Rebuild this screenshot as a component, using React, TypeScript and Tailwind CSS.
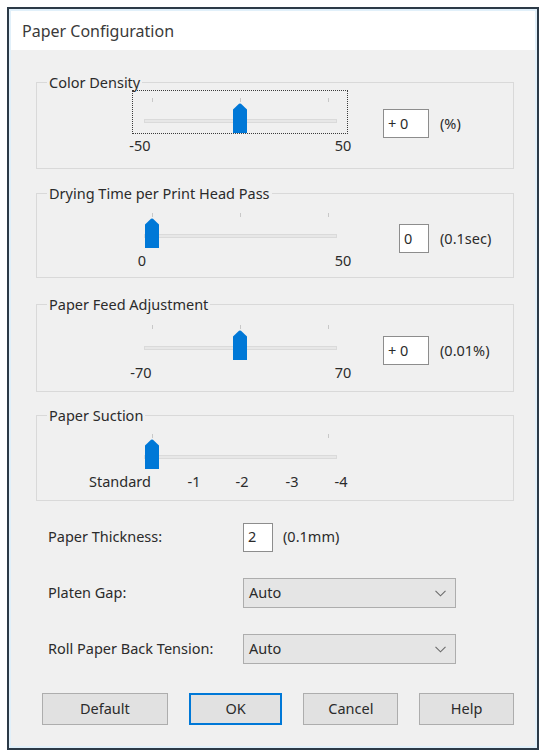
import React from 'react';

type Label = { text: string; at: number };

type SliderProps = {
  min: number;
  max: number;
  value: number;
  ticks: number[];
  labels: Label[];
  focused?: boolean;
};

// map a slider value onto the 176px travel of the thumb
const toX = (v: number, min: number, max: number) => 20 + ((v - min) / (max - min)) * 176;

const Slider: React.FC<SliderProps> = ({ min, max, value, ticks, labels, focused }) => {
  const x = toX(value, min, max);
  return (
    <div className="w-[216px]">
      <div
        className={
          'relative w-[216px] h-[44px] border ' +
          (focused ? 'border-dotted border-[#3a3a3a]' : 'border-transparent')
        }
      >
        {ticks.map((t) => (
          <div
            key={t}
            className="absolute top-[7px] w-px h-[4px] bg-[#c8c8c8]"
            style={{ left: toX(t, min, max) - 1 }}
          />
        ))}
        <div className="absolute left-[11px] top-[28px] w-[193px] h-[4px] bg-[#e7e7e7] border border-[#dadada]" />
        <svg
          className="absolute top-[12px]"
          style={{ left: x - 8 }}
          width="14"
          height="30"
          viewBox="0 0 14 30"
        >
          <path d="M0 6.5 L6 0.8 Q7 0 8 0.8 L14 6.5 V30 H0 Z" fill="#0078d7" />
        </svg>
      </div>
      <div className="relative h-[16px] mt-[3px]">
        {labels.map((l) => (
          <span
            key={l.text}
            className="absolute top-0 leading-[16px] whitespace-nowrap -translate-x-1/2"
            style={{ left: l.at }}
          >
            {l.text}
          </span>
        ))}
      </div>
    </div>
  );
};

type GroupProps = {
  title: string;
  children: React.ReactNode;
  className?: string;
  inner: string;
};

const Group: React.FC<GroupProps> = ({ title, children, className, inner }) => (
  <fieldset className={'border border-[#d9d9d9] ' + (className || '')}>
    <legend className="ml-[10px] px-[2px] leading-[16px]">{title}</legend>
    <div className={inner}>{children}</div>
  </fieldset>
);

const ValueBox: React.FC<{ text: string; w: string }> = ({ text, w }) => (
  <div className={'h-[29px] bg-white border border-[#8d8d8d] flex items-center pl-[4px] ' + w}>
    {text}
  </div>
);

const SliderRow: React.FC<{
  slider: SliderProps;
  box?: { text: string; w: string; unit: string };
}> = ({ slider, box }) => (
  <div className="flex items-start pl-[95px]">
    <Slider {...slider} />
    {box && (
      <div className="flex items-center mt-[19px]">
        <div className="w-[81px] flex justify-end">
          <ValueBox text={box.text} w={box.w} />
        </div>
        <span className="ml-[11px]">{box.unit}</span>
      </div>
    )}
  </div>
);

const Dropdown: React.FC<{ value: string }> = ({ value }) => (
  <div className="w-[213px] h-[30px] bg-[#e5e5e5] border border-[#adadad] flex items-center justify-between pl-[5px] pr-[9px]">
    <span>{value}</span>
    <svg width="11" height="7" viewBox="0 0 11 7">
      <path d="M0.5 0.8 L5.5 5.8 L10.5 0.8" fill="none" stroke="#6b6b6b" strokeWidth="1.1" />
    </svg>
  </div>
);

const Btn: React.FC<{ label: string; w: string; primary?: boolean }> = ({ label, w, primary }) => (
  <button
    className={
      'h-[32px] bg-[#e1e1e1] flex items-center justify-center ' +
      w +
      (primary ? ' border-2 border-[#0078d7]' : ' border border-[#adadad]')
    }
  >
    {label}
  </button>
);

export default function App() {
  return (
    <div className="w-[543px] h-[754px] bg-white pl-[7px] pt-[7px] font-['Noto_Sans',sans-serif] text-[14.5px] text-[#2b2b2b]">
      <div className="w-[532px] h-[743px] border-2 border-[#2c3a47]">
        <div className="h-full border-2 border-[#e1f0fa] flex flex-col">
          {/* title bar */}
          <div className="h-[39px] bg-white flex items-center pl-[11px] text-[16px] text-[#3a3a3a]">
            Paper Configuration
          </div>

          {/* body */}
          <div className="flex-1 bg-[#f0f0f0] pt-[24px] pl-[25px] pr-[21px]">
            <Group title="Color Density" inner="h-[78px]">
              <SliderRow
                slider={{
                  min: -50,
                  max: 50,
                  value: 0,
                  ticks: [-50, 0, 50],
                  focused: true,
                  labels: [
                    { text: '-50', at: 8 },
                    { text: '50', at: 211 },
                  ],
                }}
                box={{ text: '+ 0', w: 'w-[46px]', unit: '(%)' }}
              />
            </Group>

            <Group title="Drying Time per Print Head Pass" className="mt-[16px]" inner="h-[76px] pt-[4px]">
              <SliderRow
                slider={{
                  min: 0,
                  max: 50,
                  value: 0,
                  ticks: [0, 25, 50],
                  labels: [
                    { text: '0', at: 10 },
                    { text: '50', at: 211 },
                  ],
                }}
                box={{ text: '0', w: 'w-[30px]', unit: '(0.1sec)' }}
              />
            </Group>

            <Group title="Paper Feed Adjustment" className="mt-[18px]" inner="h-[79px] pt-[5px]">
              <SliderRow
                slider={{
                  min: -70,
                  max: 70,
                  value: 0,
                  ticks: [-70, 0, 70],
                  labels: [
                    { text: '-70', at: 9 },
                    { text: '70', at: 211 },
                  ],
                }}
                box={{ text: '+ 0', w: 'w-[46px]', unit: '(0.01%)' }}
              />
            </Group>

            <Group title="Paper Suction" className="mt-[15px]" inner="h-[77px] pt-[3px]">
              <SliderRow
                slider={{
                  min: 0,
                  max: 4,
                  value: 0,
                  ticks: [0, 4],
                  labels: [
                    { text: 'Standard', at: -12 },
                    { text: '-1', at: 62 },
                    { text: '-2', at: 110 },
                    { text: '-3', at: 160 },
                    { text: '-4', at: 209 },
                  ],
                }}
              />
            </Group>

            {/* plain settings */}
            <div className="pl-[12px] mt-[21px] flex flex-col gap-[26px]">
              <div className="flex items-center h-[30px]">
                <span className="w-[195px]">Paper Thickness:</span>
                <ValueBox text="2" w="w-[30px]" />
                <span className="ml-[10px]">(0.1mm)</span>
              </div>
              <div className="flex items-center h-[30px]">
                <span className="w-[195px]">Platen Gap:</span>
                <Dropdown value="Auto" />
              </div>
              <div className="flex items-center h-[30px]">
                <span className="w-[195px]">Roll Paper Back Tension:</span>
                <Dropdown value="Auto" />
              </div>
            </div>

            <div className="flex gap-[21px] mt-[29px] pl-[6px]">
              <Btn label="Default" w="w-[126px]" />
              <Btn label="OK" w="w-[94px]" primary />
              <Btn label="Cancel" w="w-[95px]" />
              <Btn label="Help" w="w-[95px]" />
            </div>
          </div>
        </div>
      </div>
    </div>
  );
}
